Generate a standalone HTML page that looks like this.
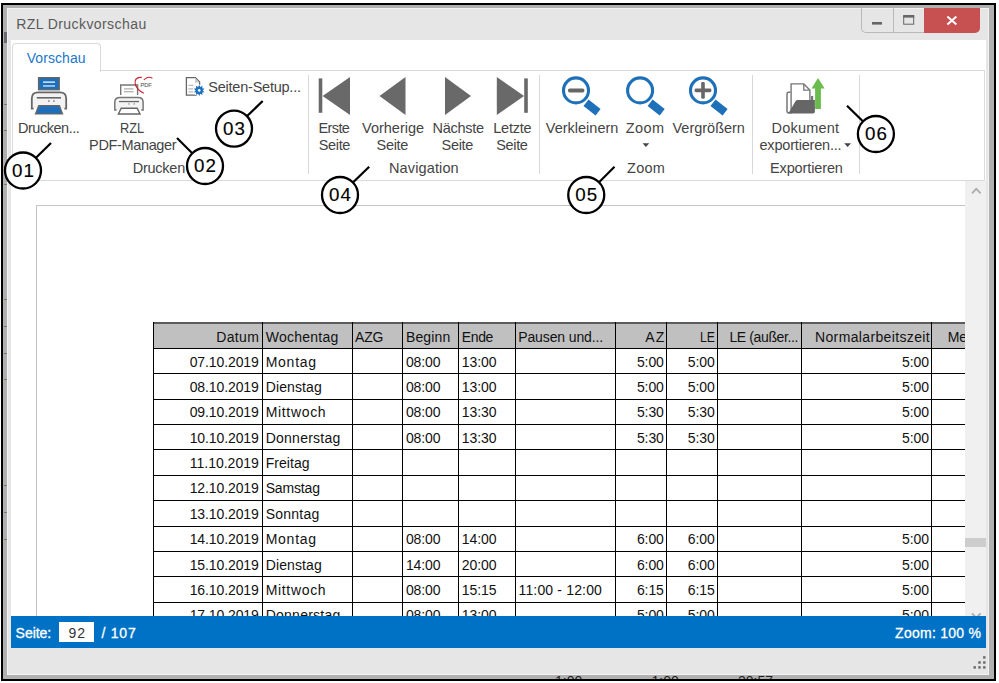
<!DOCTYPE html>
<html lang="de"><head><meta charset="utf-8"><title>RZL Druckvorschau</title>
<style>
html,body{margin:0;padding:0;background:#fff;}
body{width:999px;height:683px;position:relative;overflow:hidden;font-family:"Liberation Sans",sans-serif;color:#444;}
.abs,.t{position:absolute;}
.t{white-space:nowrap;display:block;}
#frame{left:1px;top:3px;width:991px;height:674px;border:2px solid #000;background:#b0b0b0;}
#win{left:7px;top:8px;width:982px;height:667px;background:#e6e6e6;box-shadow:inset 1px 1px 0 #f3f3f3,inset -1px -1px 0 #f3f3f3;}
#white{left:11px;top:40px;width:975px;height:576px;background:#fff;}
#tab{left:12px;top:43px;width:87px;height:28px;border:1px solid #dadada;border-bottom:none;border-radius:4px 4px 0 0;background:#fff;box-sizing:content-box;}
#ribbon{left:12px;top:70px;width:971px;height:109px;border:1px solid #dadada;background:#fff;}
.sep{position:absolute;top:75px;width:1px;height:99px;background:#d8d8d8;}
#sb{left:965px;top:181px;width:21px;height:435px;background:#f0f0f0;}
#thumb{left:965px;top:538px;width:21px;height:9px;background:#cdcdcd;}
#status{left:11px;top:616px;width:975px;height:32px;background:#0072c6;}
#pgbox{left:59px;top:622px;width:35px;height:20px;background:#fff;}
.hl{position:absolute;height:1px;background:#000;}
.vl{position:absolute;width:1px;background:#000;}
#doc{left:11px;top:181px;width:954px;height:435px;overflow:hidden;background:#fff;}
#doc .t{color:#111;}
svg{position:absolute;left:0;top:0;overflow:visible;}
</style></head><body>
<div id="frame" class="abs"></div>
<div class="abs" style="left:4px;top:32px;width:3px;height:11px;background:#6d6a72;"></div>
<div class="abs" style="left:3px;top:676px;width:991px;height:3px;overflow:hidden;font-size:14px;line-height:14px;color:#222;white-space:nowrap;"><span class="t" style="left:552px;top:-2px;">1:00</span><span class="t" style="left:640px;top:-2px;">- 1:00</span><span class="t" style="left:735px;top:-2px;">20:57</span></div>
<i class="abs" style="left:4px;top:104px;width:3px;height:1px;background:#85786c"></i><i class="abs" style="left:4px;top:130px;width:3px;height:1px;background:#85786c"></i><i class="abs" style="left:4px;top:184px;width:3px;height:1px;background:#85786c"></i><i class="abs" style="left:4px;top:299px;width:3px;height:1px;background:#85786c"></i><i class="abs" style="left:4px;top:326px;width:3px;height:1px;background:#85786c"></i><i class="abs" style="left:4px;top:353px;width:3px;height:1px;background:#85786c"></i><i class="abs" style="left:4px;top:379px;width:3px;height:1px;background:#85786c"></i><i class="abs" style="left:4px;top:485px;width:3px;height:1px;background:#85786c"></i><i class="abs" style="left:4px;top:512px;width:3px;height:1px;background:#85786c"></i><i class="abs" style="left:4px;top:539px;width:3px;height:1px;background:#85786c"></i>
<div id="win" class="abs"></div>
<span class="t" style="left:16.20px;top:16.15px;font-size:14px;line-height:16.80px;letter-spacing:0.426px;color:#5a5a5a;">RZL Druckvorschau</span><div class="abs" style="left:861px;top:8px;width:63px;height:25px;border:1px solid #b9b9b9;border-top:none;border-right:none;border-radius:0 0 0 5px;box-sizing:border-box;"></div>
<div class="abs" style="left:893px;top:8px;width:1px;height:25px;background:#b9b9b9;"></div>
<div class="abs" style="left:924px;top:8px;width:56px;height:25px;background:#c75050;border-radius:0 0 5px 0;"></div>
<svg width="999" height="683" viewBox="0 0 999 683">
<rect x="872" y="22" width="10" height="2.6" fill="#666"/>
<rect x="903.7" y="16.2" width="10" height="8" fill="none" stroke="#666" stroke-width="1"/>
<rect x="903.2" y="15" width="11" height="2.6" fill="#666"/>
<path d="M947.4 16.4 L956.4 24.4 M956.4 16.4 L947.4 24.4" stroke="#fff" stroke-width="2" fill="none"/>
</svg>
<div id="white" class="abs"></div>
<div id="ribbon" class="abs"></div>
<div id="tab" class="abs"></div>
<span class="t" style="left:26.70px;top:49.65px;font-size:14px;line-height:16.80px;letter-spacing:0.075px;color:#1c76c9;">Vorschau</span><div class="sep" style="left:308px"></div><div class="sep" style="left:539px"></div><div class="sep" style="left:752px"></div><div class="sep" style="left:859px"></div>
<span class="t" style="left:18.00px;top:119.78px;font-size:14.5px;line-height:17.40px;letter-spacing:-0.475px;color:#444;">Drucken...</span>
<span class="t" style="left:120.40px;top:119.78px;font-size:14.5px;line-height:17.40px;color:#444;transform:scaleX(0.883);transform-origin:0 0;">RZL</span>
<span class="t" style="left:89.10px;top:136.78px;font-size:14.5px;line-height:17.40px;letter-spacing:-0.356px;color:#444;">PDF-Manager</span>
<span class="t" style="left:132.80px;top:159.78px;font-size:14.5px;line-height:17.40px;letter-spacing:-0.266px;color:#444;">Drucken</span>
<span class="t" style="left:208.30px;top:79.08px;font-size:14.5px;line-height:17.40px;letter-spacing:-0.230px;color:#444;">Seiten-Setup...</span>
<span class="t" style="left:318.50px;top:119.78px;font-size:14.5px;line-height:17.40px;letter-spacing:-0.611px;color:#444;">Erste</span>
<span class="t" style="left:318.75px;top:136.78px;font-size:14.5px;line-height:17.40px;letter-spacing:-0.350px;color:#444;">Seite</span>
<span class="t" style="left:362.00px;top:119.78px;font-size:14.5px;line-height:17.40px;letter-spacing:0.010px;color:#444;">Vorherige</span>
<span class="t" style="left:376.50px;top:136.78px;font-size:14.5px;line-height:17.40px;letter-spacing:-0.288px;color:#444;">Seite</span>
<span class="t" style="left:432.50px;top:119.78px;font-size:14.5px;line-height:17.40px;letter-spacing:-0.257px;color:#444;">Nächste</span>
<span class="t" style="left:441.50px;top:136.78px;font-size:14.5px;line-height:17.40px;letter-spacing:-0.288px;color:#444;">Seite</span>
<span class="t" style="left:493.25px;top:119.78px;font-size:14.5px;line-height:17.40px;letter-spacing:-0.220px;color:#444;">Letzte</span>
<span class="t" style="left:496.25px;top:136.78px;font-size:14.5px;line-height:17.40px;letter-spacing:-0.350px;color:#444;">Seite</span>
<span class="t" style="left:389.00px;top:159.78px;font-size:14.5px;line-height:17.40px;letter-spacing:0.126px;color:#444;">Navigation</span>
<span class="t" style="left:545.75px;top:119.78px;font-size:14.5px;line-height:17.40px;letter-spacing:0.011px;color:#444;">Verkleinern</span>
<span class="t" style="left:625.75px;top:119.78px;font-size:14.5px;line-height:17.40px;letter-spacing:0.445px;color:#444;">Zoom</span>
<span class="t" style="left:672.50px;top:119.78px;font-size:14.5px;line-height:17.40px;letter-spacing:-0.015px;color:#444;">Vergrößern</span>
<span class="t" style="left:627.00px;top:159.78px;font-size:14.5px;line-height:17.40px;letter-spacing:0.279px;color:#444;">Zoom</span>
<span class="t" style="left:771.50px;top:119.78px;font-size:14.5px;line-height:17.40px;letter-spacing:0.223px;color:#444;">Dokument</span>
<span class="t" style="left:759.50px;top:136.78px;font-size:14.5px;line-height:17.40px;letter-spacing:-0.191px;color:#444;">exportieren...</span>
<span class="t" style="left:770.00px;top:159.78px;font-size:14.5px;line-height:17.40px;letter-spacing:-0.125px;color:#444;">Exportieren</span>
<svg width="999" height="683" viewBox="0 0 999 683">
<!-- printer -->
<g>
<rect x="38.6" y="77.7" width="20.6" height="12" fill="#1c6fbd" stroke="#666" stroke-width="1.4"/>
<rect x="43" y="81.4" width="12" height="1.5" fill="#d6e6f5"/><rect x="43" y="85.2" width="12" height="1.5" fill="#c0d8ee"/>
<path d="M33.6 108.6 H31.8 V98.5 Q31.8 92.4 38 92.4 H60 Q66.2 92.4 66.2 98.5 V108.6 H64.4" fill="#f2f2f2" stroke="#666" stroke-width="1.8"/>
<rect x="36.8" y="97" width="24.2" height="1.6" fill="#666"/>
<rect x="48" y="100.3" width="1.6" height="1.6" fill="#888"/><rect x="53.1" y="100.3" width="1.6" height="1.6" fill="#888"/>
<path d="M38.8 105.8 H59.4 L62.4 113.9 H35.6 Z" fill="#1c6fbd" stroke="#666" stroke-width="1.4" stroke-linejoin="miter"/>
</g>
<!-- pdf printer -->
<g>
<path d="M120.7 95 V85 H137.6 V95" fill="#fff" stroke="#777" stroke-width="1.4"/>
<rect x="124" y="88.3" width="9.5" height="1.2" fill="#aaa"/><rect x="124" y="91.1" width="9.5" height="1.2" fill="#aaa"/>
<path d="M116.6 110 H114.8 V102 Q114.8 97.4 120 97.4 H138 Q143.1 97.4 143.1 102 V110 H141.3" fill="#f4f4f4" stroke="#777" stroke-width="1.5"/>
<rect x="119" y="100.9" width="20" height="1.3" fill="#666"/>
<rect x="128.2" y="103.2" width="1.4" height="1.4" fill="#999"/><rect x="133.6" y="103.2" width="1.4" height="1.4" fill="#999"/>
<path d="M121.2 108.3 H137.1 L140 114 H118.4 Z" fill="#fff" stroke="#666" stroke-width="1.4"/>
<path d="M141.8 77.4 C136 76.6 134.2 80.6 135.4 84.6 C136.6 88.6 140 91.4 143.8 93.2" fill="none" stroke="#c4232f" stroke-width="1.25"/>
<path d="M143.8 80 C146 77.4 149.6 76.8 152.4 78.2" fill="none" stroke="#c4232f" stroke-width="1.1"/>
<text x="140.6" y="87.3" font-family="Liberation Sans, sans-serif" font-size="5.6" fill="#666" stroke="#666" stroke-width="0.15" textLength="11.2" lengthAdjust="spacingAndGlyphs">PDF</text>
</g>
<!-- page setup -->
<g>
<path d="M186.4 77.6 H195.4 L199.6 82 V95.2 H186.4 Z" fill="#fff" stroke="#666" stroke-width="1.3"/>
<path d="M195 77.8 V82.4 H199.4 Z" fill="#ccc"/>
<rect x="188.4" y="84.8" width="5" height="1" fill="#aaa"/><rect x="188.4" y="88.4" width="5" height="1" fill="#aaa"/><rect x="188.4" y="91.4" width="5" height="1" fill="#aaa"/>
<g transform="translate(199.2 90.4)">
<circle r="5.9" fill="#fff"/>
<polygon fill="#1c6fbd" points="0.00,-5.60 1.08,-3.32 3.29,-4.53 3.01,-2.03 5.33,-1.73 3.49,-0.00 5.33,1.73 3.01,2.03 3.29,4.53 1.08,3.32 0.00,5.60 -1.08,3.32 -3.29,4.53 -3.01,2.03 -5.33,1.73 -3.49,0.00 -5.33,-1.73 -3.01,-2.03 -3.29,-4.53 -1.08,-3.32"/>
<circle r="1.3" fill="#fff"/></g>
</g>
<!-- nav -->
<g fill="#696969">
<rect x="318.7" y="78.4" width="3.6" height="34.4"/><polygon points="350,77 350,115 322.6,96"/>
<polygon points="405.5,77 405.5,115 379.5,96"/>
<polygon points="445,77 445,115 471,96"/>
<polygon points="496.8,77 496.8,115 524,96"/><rect x="524.2" y="78.4" width="3.6" height="34.4"/>
</g>
<!-- zoom icons -->
<g id="zo">
<circle cx="576" cy="90.4" r="12.5" fill="#fff" stroke="#1e70b8" stroke-width="3.1"/>
<polygon points="588.5,99.6 600.6,109.0 595.6,115.4 583.5,106.0" fill="#1e70b8"/>
<rect x="568" y="88.6" width="16.4" height="3.8" rx="1.6" fill="#666"/>
</g>
<g>
<circle cx="640.1" cy="90.4" r="12.5" fill="#fff" stroke="#1e70b8" stroke-width="3.1"/>
<polygon points="652.6,99.6 664.7,109.0 659.7,115.4 647.6,106.0" fill="#1e70b8"/>
</g>
<g>
<circle cx="703" cy="90.4" r="12.5" fill="#fff" stroke="#1e70b8" stroke-width="3.1"/>
<polygon points="715.5,99.6 727.6,109.0 722.6,115.4 710.5,106.0" fill="#1e70b8"/>
<rect x="694.6" y="88.6" width="16.8" height="3.6" rx="1.4" fill="#666"/><rect x="701.2" y="81.9" width="3.6" height="16.9" rx="1.4" fill="#666"/>
</g>
<polygon points="642.6,143.3 649.2,143.3 645.9,147.1" fill="#444"/>
<polygon points="844.2,143.3 851,143.3 847.6,147.1" fill="#444"/>
<!-- export -->
<g>
<path d="M790.6 92.3 H788.6 Q787 92.3 787 94 V111 Q787 112.8 788.8 112.8 H792" fill="#fff" stroke="#777" stroke-width="1.5"/>
<path d="M791.1 110 V83.9 H803.8 L809.9 90 V101" fill="#fff" stroke="#777" stroke-width="1.4"/>
<path d="M803.8 84 V90.2 H809.8" fill="none" stroke="#777" stroke-width="1.3"/>
<path d="M811.6 100 V96.5 H812.6 V100" fill="none" stroke="#777" stroke-width="1.2"/>
<path d="M788.2 113.5 L790.7 109.5 L795.6 101 Q796.3 100 797.6 100 H814.9 V111.5 Q814.9 113.5 812.9 113.5 Z" fill="#666"/>
<polygon points="818,78 824.7,88.4 820.9,88.4 820.9,109.1 815.1,109.1 815.1,88.4 811.5,88.4" fill="#6abd4d"/>
</g>
</svg>
<div id="doc" class="abs">
<div class="abs" style="left:25px;top:24px;width:1px;height:420px;background:#c4c4c4"></div><div class="abs" style="left:25px;top:24px;width:940px;height:1px;background:#c4c4c4"></div>
<div class="abs" style="left:142px;top:141px;width:820px;height:26px;background:#c0c0c0"></div><div class="abs" style="left:142px;top:141px;width:820px;height:2px;background:#5c5c5c"></div><div class="hl" style="left:142px;top:167px;width:820px"></div><div class="hl" style="left:142px;top:192px;width:820px"></div><div class="hl" style="left:142px;top:218px;width:820px"></div><div class="hl" style="left:142px;top:243px;width:820px"></div><div class="hl" style="left:142px;top:268px;width:820px"></div><div class="hl" style="left:142px;top:294px;width:820px"></div><div class="hl" style="left:142px;top:319px;width:820px"></div><div class="hl" style="left:142px;top:345px;width:820px"></div><div class="hl" style="left:142px;top:370px;width:820px"></div><div class="hl" style="left:142px;top:395px;width:820px"></div><div class="hl" style="left:142px;top:421px;width:820px"></div><div class="hl" style="left:142px;top:446px;width:820px"></div><div class="vl" style="left:142px;top:141px;height:300px"></div><div class="vl" style="left:251px;top:141px;height:300px"></div><div class="vl" style="left:341px;top:141px;height:300px"></div><div class="vl" style="left:391px;top:141px;height:300px"></div><div class="vl" style="left:447px;top:141px;height:300px"></div><div class="vl" style="left:504px;top:141px;height:300px"></div><div class="vl" style="left:604px;top:141px;height:300px"></div><div class="vl" style="left:655px;top:141px;height:300px"></div><div class="vl" style="left:706px;top:141px;height:300px"></div><div class="vl" style="left:790px;top:141px;height:300px"></div><div class="vl" style="left:920px;top:141px;height:300px"></div>
<span class="t" style="left:205.30px;top:147.50px;font-size:14px;line-height:16.80px;letter-spacing:0.316px;">Datum</span><span class="t" style="left:254.70px;top:147.50px;font-size:14px;line-height:16.80px;letter-spacing:0.242px;">Wochentag</span><span class="t" style="left:344.10px;top:147.50px;font-size:14px;line-height:16.80px;letter-spacing:-0.290px;">AZG</span><span class="t" style="left:394.90px;top:147.50px;font-size:14px;line-height:16.80px;letter-spacing:0.161px;">Beginn</span><span class="t" style="left:450.80px;top:147.50px;font-size:14px;line-height:16.80px;letter-spacing:-0.366px;">Ende</span><span class="t" style="left:507.20px;top:147.50px;font-size:14px;line-height:16.80px;letter-spacing:-0.117px;">Pausen und...</span><span class="t" style="left:634.30px;top:147.50px;font-size:14px;line-height:16.80px;letter-spacing:1.210px;">AZ</span><span class="t" style="left:688.80px;top:147.50px;font-size:14px;line-height:16.80px;transform:scaleX(0.870);transform-origin:0 0;">LE</span><span class="t" style="left:718.40px;top:147.50px;font-size:14px;line-height:16.80px;letter-spacing:-0.368px;">LE (außer...</span><span class="t" style="left:804.00px;top:147.50px;font-size:14px;line-height:16.80px;letter-spacing:0.361px;">Normalarbeitszeit</span><span class="t" style="left:936.70px;top:147.50px;font-size:14px;line-height:16.80px;">Mehrarbeit</span>
<span class="t" style="left:178.70px;top:172.55px;font-size:14px;line-height:16.80px;letter-spacing:-0.108px;">07.10.2019</span><span class="t" style="left:254.70px;top:172.55px;font-size:14px;line-height:16.80px;letter-spacing:0.741px;">Montag</span><span class="t" style="left:394.90px;top:172.55px;font-size:14px;line-height:16.80px;letter-spacing:-0.084px;">08:00</span><span class="t" style="left:450.80px;top:172.55px;font-size:14px;line-height:16.80px;letter-spacing:-0.084px;">13:00</span><span class="t" style="left:625.90px;top:172.55px;font-size:14px;line-height:16.80px;letter-spacing:-0.083px;">5:00</span><span class="t" style="left:676.70px;top:172.55px;font-size:14px;line-height:16.80px;letter-spacing:-0.083px;">5:00</span><span class="t" style="left:891.10px;top:172.55px;font-size:14px;line-height:16.80px;letter-spacing:-0.083px;">5:00</span>
<span class="t" style="left:178.70px;top:197.75px;font-size:14px;line-height:16.80px;letter-spacing:-0.108px;">08.10.2019</span><span class="t" style="left:254.70px;top:197.75px;font-size:14px;line-height:16.80px;letter-spacing:0.121px;">Dienstag</span><span class="t" style="left:394.90px;top:197.75px;font-size:14px;line-height:16.80px;letter-spacing:-0.084px;">08:00</span><span class="t" style="left:450.80px;top:197.75px;font-size:14px;line-height:16.80px;letter-spacing:-0.084px;">13:00</span><span class="t" style="left:625.90px;top:197.75px;font-size:14px;line-height:16.80px;letter-spacing:-0.083px;">5:00</span><span class="t" style="left:676.70px;top:197.75px;font-size:14px;line-height:16.80px;letter-spacing:-0.083px;">5:00</span><span class="t" style="left:891.10px;top:197.75px;font-size:14px;line-height:16.80px;letter-spacing:-0.083px;">5:00</span>
<span class="t" style="left:178.70px;top:223.15px;font-size:14px;line-height:16.80px;letter-spacing:-0.108px;">09.10.2019</span><span class="t" style="left:254.70px;top:223.15px;font-size:14px;line-height:16.80px;letter-spacing:0.666px;">Mittwoch</span><span class="t" style="left:394.90px;top:223.15px;font-size:14px;line-height:16.80px;letter-spacing:-0.084px;">08:00</span><span class="t" style="left:450.80px;top:223.15px;font-size:14px;line-height:16.80px;letter-spacing:-0.084px;">13:30</span><span class="t" style="left:625.90px;top:223.15px;font-size:14px;line-height:16.80px;letter-spacing:-0.083px;">5:30</span><span class="t" style="left:676.70px;top:223.15px;font-size:14px;line-height:16.80px;letter-spacing:-0.083px;">5:30</span><span class="t" style="left:891.10px;top:223.15px;font-size:14px;line-height:16.80px;letter-spacing:-0.083px;">5:00</span>
<span class="t" style="left:178.70px;top:248.55px;font-size:14px;line-height:16.80px;letter-spacing:-0.108px;">10.10.2019</span><span class="t" style="left:254.70px;top:248.55px;font-size:14px;line-height:16.80px;letter-spacing:0.247px;">Donnerstag</span><span class="t" style="left:394.90px;top:248.55px;font-size:14px;line-height:16.80px;letter-spacing:-0.084px;">08:00</span><span class="t" style="left:450.80px;top:248.55px;font-size:14px;line-height:16.80px;letter-spacing:-0.084px;">13:30</span><span class="t" style="left:625.90px;top:248.55px;font-size:14px;line-height:16.80px;letter-spacing:-0.083px;">5:30</span><span class="t" style="left:676.70px;top:248.55px;font-size:14px;line-height:16.80px;letter-spacing:-0.083px;">5:30</span><span class="t" style="left:891.10px;top:248.55px;font-size:14px;line-height:16.80px;letter-spacing:-0.083px;">5:00</span>
<span class="t" style="left:178.70px;top:273.95px;font-size:14px;line-height:16.80px;letter-spacing:0.008px;">11.10.2019</span><span class="t" style="left:254.70px;top:273.95px;font-size:14px;line-height:16.80px;letter-spacing:0.055px;">Freitag</span>
<span class="t" style="left:178.70px;top:299.35px;font-size:14px;line-height:16.80px;letter-spacing:-0.108px;">12.10.2019</span><span class="t" style="left:254.70px;top:299.35px;font-size:14px;line-height:16.80px;letter-spacing:-0.158px;">Samstag</span>
<span class="t" style="left:178.70px;top:324.75px;font-size:14px;line-height:16.80px;letter-spacing:-0.108px;">13.10.2019</span><span class="t" style="left:254.70px;top:324.75px;font-size:14px;line-height:16.80px;letter-spacing:0.224px;">Sonntag</span>
<span class="t" style="left:178.70px;top:350.15px;font-size:14px;line-height:16.80px;letter-spacing:-0.108px;">14.10.2019</span><span class="t" style="left:254.70px;top:350.15px;font-size:14px;line-height:16.80px;letter-spacing:0.741px;">Montag</span><span class="t" style="left:394.90px;top:350.15px;font-size:14px;line-height:16.80px;letter-spacing:-0.084px;">08:00</span><span class="t" style="left:450.80px;top:350.15px;font-size:14px;line-height:16.80px;letter-spacing:-0.084px;">14:00</span><span class="t" style="left:625.90px;top:350.15px;font-size:14px;line-height:16.80px;letter-spacing:-0.083px;">6:00</span><span class="t" style="left:676.70px;top:350.15px;font-size:14px;line-height:16.80px;letter-spacing:-0.083px;">6:00</span><span class="t" style="left:891.10px;top:350.15px;font-size:14px;line-height:16.80px;letter-spacing:-0.083px;">5:00</span>
<span class="t" style="left:178.70px;top:375.55px;font-size:14px;line-height:16.80px;letter-spacing:-0.108px;">15.10.2019</span><span class="t" style="left:254.70px;top:375.55px;font-size:14px;line-height:16.80px;letter-spacing:0.121px;">Dienstag</span><span class="t" style="left:394.90px;top:375.55px;font-size:14px;line-height:16.80px;letter-spacing:-0.084px;">14:00</span><span class="t" style="left:450.80px;top:375.55px;font-size:14px;line-height:16.80px;letter-spacing:-0.084px;">20:00</span><span class="t" style="left:625.90px;top:375.55px;font-size:14px;line-height:16.80px;letter-spacing:-0.083px;">6:00</span><span class="t" style="left:676.70px;top:375.55px;font-size:14px;line-height:16.80px;letter-spacing:-0.083px;">6:00</span><span class="t" style="left:891.10px;top:375.55px;font-size:14px;line-height:16.80px;letter-spacing:-0.083px;">5:00</span>
<span class="t" style="left:178.70px;top:400.95px;font-size:14px;line-height:16.80px;letter-spacing:-0.108px;">16.10.2019</span><span class="t" style="left:254.70px;top:400.95px;font-size:14px;line-height:16.80px;letter-spacing:0.666px;">Mittwoch</span><span class="t" style="left:394.90px;top:400.95px;font-size:14px;line-height:16.80px;letter-spacing:-0.084px;">08:00</span><span class="t" style="left:450.80px;top:400.95px;font-size:14px;line-height:16.80px;letter-spacing:-0.084px;">15:15</span><span class="t" style="left:507.50px;top:400.95px;font-size:14px;line-height:16.80px;letter-spacing:0.161px;">11:00 - 12:00</span><span class="t" style="left:625.90px;top:400.95px;font-size:14px;line-height:16.80px;letter-spacing:-0.083px;">6:15</span><span class="t" style="left:676.70px;top:400.95px;font-size:14px;line-height:16.80px;letter-spacing:-0.083px;">6:15</span><span class="t" style="left:891.10px;top:400.95px;font-size:14px;line-height:16.80px;letter-spacing:-0.083px;">5:00</span>
<span class="t" style="left:178.70px;top:426.35px;font-size:14px;line-height:16.80px;letter-spacing:-0.108px;">17.10.2019</span><span class="t" style="left:254.70px;top:426.35px;font-size:14px;line-height:16.80px;letter-spacing:0.247px;">Donnerstag</span><span class="t" style="left:394.90px;top:426.35px;font-size:14px;line-height:16.80px;letter-spacing:-0.084px;">08:00</span><span class="t" style="left:450.80px;top:426.35px;font-size:14px;line-height:16.80px;letter-spacing:-0.084px;">13:00</span><span class="t" style="left:625.90px;top:426.35px;font-size:14px;line-height:16.80px;letter-spacing:-0.083px;">5:00</span><span class="t" style="left:676.70px;top:426.35px;font-size:14px;line-height:16.80px;letter-spacing:-0.083px;">5:00</span><span class="t" style="left:891.10px;top:426.35px;font-size:14px;line-height:16.80px;letter-spacing:-0.083px;">5:00</span>
</div>
<div id="sb" class="abs"></div><div id="thumb" class="abs"></div>
<svg width="999" height="683" viewBox="0 0 999 683"><path d="M972 193.4 L976.3 188.9 L980.6 193.4" fill="none" stroke="#adadad" stroke-width="1.8"/>
<path d="M972 613.4 L976.3 617.9 L980.6 613.4" fill="none" stroke="#adadad" stroke-width="1.8"/></svg>
<div id="status" class="abs"></div><div id="pgbox" class="abs"></div>
<span class="t" style="left:15.60px;top:624.95px;font-size:14px;line-height:16.80px;letter-spacing:-0.040px;color:#fff;-webkit-text-stroke:0.3px #fff;">Seite:</span><span class="t" style="left:68.50px;top:624.95px;font-size:14px;line-height:16.80px;letter-spacing:0.928px;color:#333;">92</span><span class="t" style="left:101.50px;top:624.95px;font-size:14px;line-height:16.80px;letter-spacing:0.766px;color:#fff;-webkit-text-stroke:0.3px #fff;">/ 107</span><span class="t" style="left:895.10px;top:625.05px;font-size:14px;line-height:16.80px;letter-spacing:0.264px;color:#fff;-webkit-text-stroke:0.3px #fff;">Zoom: 100 %</span>
<svg width="999" height="683" viewBox="0 0 999 683"><rect x="983.1" y="656.2" width="2.4" height="2.4" fill="#666"/><rect x="978.3" y="661.3" width="2.4" height="2.4" fill="#666"/><rect x="983.1" y="661.3" width="2.4" height="2.4" fill="#666"/><rect x="973.5" y="666.2" width="2.4" height="2.4" fill="#666"/><rect x="978.3" y="666.2" width="2.4" height="2.4" fill="#666"/><rect x="983.1" y="666.2" width="2.4" height="2.4" fill="#666"/>
<line x1="23" y1="170.5" x2="51" y2="143" stroke="#000" stroke-width="2.2"/><circle cx="23" cy="170.5" r="18" fill="#fff" stroke="#000" stroke-width="2.3"/><text transform="translate(23.60 176.90) scale(1.03 1)" text-anchor="middle" letter-spacing="1.1" font-family="Liberation Sans, sans-serif" font-size="18.2" fill="#000" stroke="#000" stroke-width="0.15">01</text>
<line x1="205" y1="166" x2="177" y2="138" stroke="#000" stroke-width="2.2"/><circle cx="205" cy="166" r="18" fill="#fff" stroke="#000" stroke-width="2.3"/><text transform="translate(205.60 172.40) scale(1.03 1)" text-anchor="middle" letter-spacing="1.1" font-family="Liberation Sans, sans-serif" font-size="18.2" fill="#000" stroke="#000" stroke-width="0.15">02</text>
<line x1="234" y1="128.6" x2="262.7" y2="101" stroke="#000" stroke-width="2.2"/><circle cx="234" cy="128.6" r="18" fill="#fff" stroke="#000" stroke-width="2.3"/><text transform="translate(234.60 135.00) scale(1.03 1)" text-anchor="middle" letter-spacing="1.1" font-family="Liberation Sans, sans-serif" font-size="18.2" fill="#000" stroke="#000" stroke-width="0.15">03</text>
<line x1="340" y1="195" x2="369.2" y2="166.8" stroke="#000" stroke-width="2.2"/><circle cx="340" cy="195" r="18" fill="#fff" stroke="#000" stroke-width="2.3"/><text transform="translate(340.60 201.40) scale(1.03 1)" text-anchor="middle" letter-spacing="1.1" font-family="Liberation Sans, sans-serif" font-size="18.2" fill="#000" stroke="#000" stroke-width="0.15">04</text>
<line x1="586.25" y1="195" x2="614.5" y2="166.75" stroke="#000" stroke-width="2.2"/><circle cx="586.25" cy="195" r="18" fill="#fff" stroke="#000" stroke-width="2.3"/><text transform="translate(586.85 201.40) scale(1.03 1)" text-anchor="middle" letter-spacing="1.1" font-family="Liberation Sans, sans-serif" font-size="18.2" fill="#000" stroke="#000" stroke-width="0.15">05</text>
<line x1="875.9" y1="134" x2="847" y2="105.75" stroke="#000" stroke-width="2.2"/><circle cx="875.9" cy="134" r="18" fill="#fff" stroke="#000" stroke-width="2.3"/><text transform="translate(876.50 140.40) scale(1.03 1)" text-anchor="middle" letter-spacing="1.1" font-family="Liberation Sans, sans-serif" font-size="18.2" fill="#000" stroke="#000" stroke-width="0.15">06</text>
</svg>
</body></html>
